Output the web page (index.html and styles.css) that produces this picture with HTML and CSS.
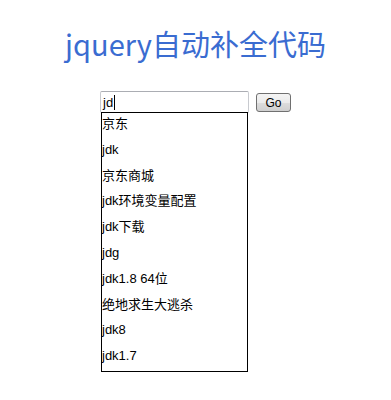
FILE: index.html
```html
<!DOCTYPE html>
<html lang="zh-CN">
<head>
<meta charset="utf-8">
<title>jquery自动补全代码</title>
<link rel="stylesheet" href="styles.css">
</head>
<body>
<h1 class="title">jquery自动补全代码</h1>
<div class="search">
  <div class="field">
    <div class="box"><span class="typed">jd</span><span class="caret"></span></div>
    <ul class="suggest">
      <li>京东</li>
      <li>jdk</li>
      <li>京东商城</li>
      <li>jdk环境变量配置</li>
      <li>jdk下载</li>
      <li>jdg</li>
      <li>jdk1.8 64位</li>
      <li>绝地求生大逃杀</li>
      <li>jdk8</li>
      <li>jdk1.7</li>
    </ul>
  </div>
  <button class="go" type="button">Go</button>
</div>
</body>
</html>
```

FILE: styles.css
```css
html, body {
  margin: 0;
  padding: 0;
  background: #ffffff;
}

body {
  min-height: 400px;
  font-family: "Liberation Sans", "Noto Sans CJK SC", sans-serif;
  font-size: 13px;
  color: #000;
}

.title {
  margin: 23px 0 0 0;
  text-align: center;
  font-family: "Noto Sans CJK SC", sans-serif;
  font-weight: normal;
  font-size: 29px;
  line-height: 40px;
  color: #3a6cd1;
}

.search {
  margin-top: 28px;
  display: flex;
  justify-content: center;
  align-items: flex-start;
  gap: 7px;
}

.field {
  display: flex;
  flex-direction: column;
  width: 149px;
}

.box {
  box-sizing: border-box;
  height: 22px;
  width: 149px;
  border: 1px solid #c8cacf;
  border-top-color: #abadb3;
  border-radius: 2px;
  padding: 0 2px;
  display: flex;
  align-items: center;
  font-family: "Liberation Sans", "Noto Sans CJK SC", sans-serif;
  font-size: 13px;
}

.caret {
  display: inline-block;
  width: 1px;
  height: 15px;
  background: #000;
  margin-left: 1px;
}

.suggest {
  box-sizing: border-box;
  width: 147px;
  height: 260px;
  margin: -1px 0 0 1px;
  padding: 0;
  list-style: none;
  border: 1px solid #000;
  background: #fff;
}

.suggest li {
  height: 25.8px;
  line-height: 22px;
  padding-left: 0;
  white-space: nowrap;
}

.go {
  box-sizing: border-box;
  width: 35px;
  height: 19px;
  margin-top: 2px;
  padding: 0;
  border: 1px solid #707070;
  border-radius: 3px;
  background: linear-gradient(#f4f4f4 0%, #ebebeb 50%, #dddddd 51%, #cfcfcf 100%);
  font-family: "Liberation Sans", sans-serif;
  font-size: 12px;
  color: #000;
}
```
